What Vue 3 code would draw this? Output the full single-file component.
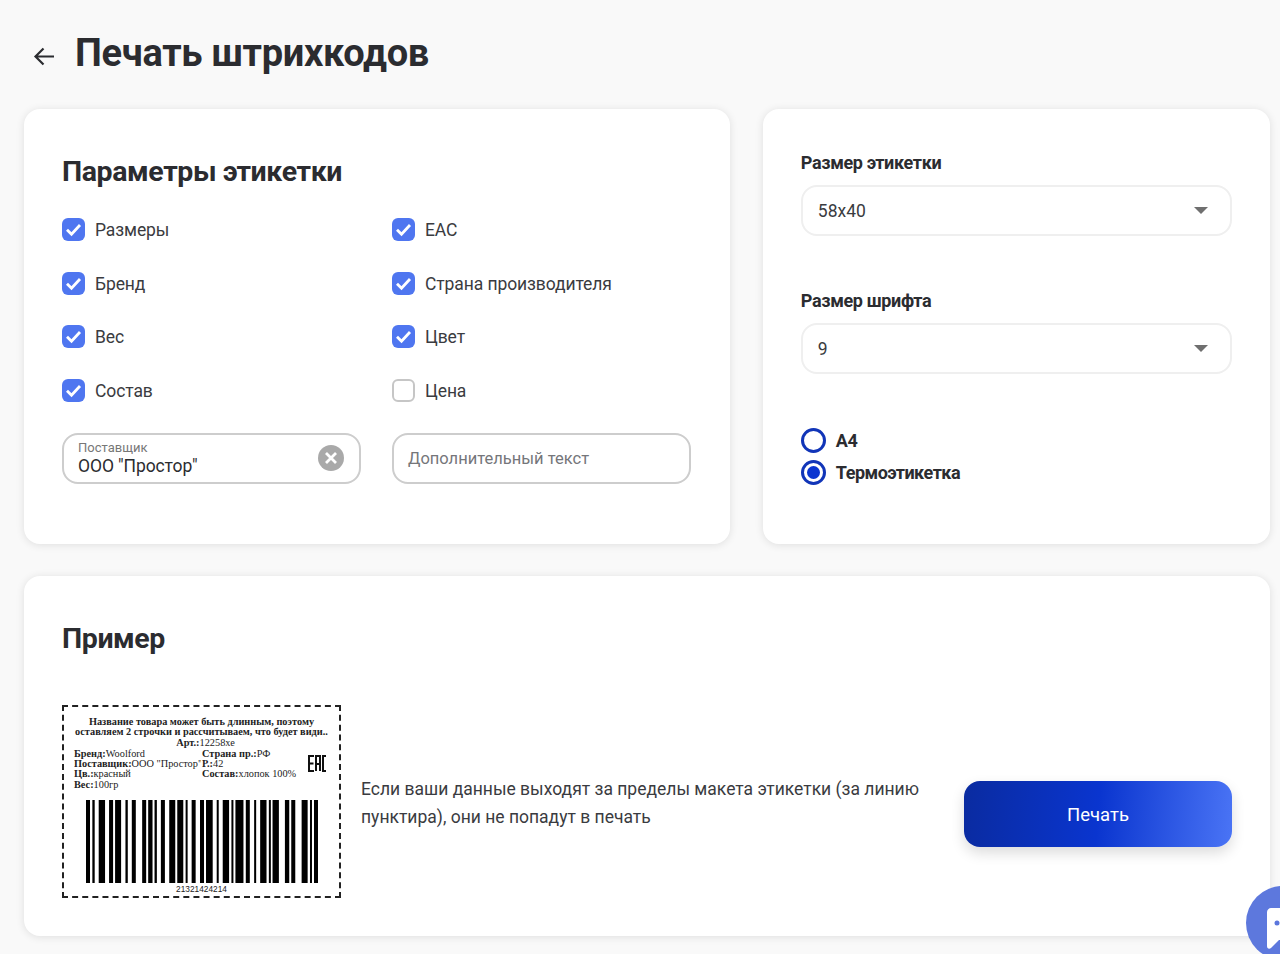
<script setup>
const leftChecks = [
  { label: 'Размеры', on: true },
  { label: 'Бренд', on: true },
  { label: 'Вес', on: true },
  { label: 'Состав', on: true }
]
const rightChecks = [
  { label: 'ЕАС', on: true },
  { label: 'Страна производителя', on: true },
  { label: 'Цвет', on: true },
  { label: 'Цена', on: false }
]
const checks = leftChecks.flatMap((c, i) => [c, rightChecks[i]])
const bars = [[108,120],[127,134],[146,165],[177,189],[195,213],[226,233],[245,257],[276,288],[294,307],[313,320],[332,344],[357,375],[381,399],[406,412],[424,436],[449,461],[467,487],[499,505],[517,536],[543,549],[555,579],[586,598],[611,617],[629,648],[655,661],[666,685],[703,716],[722,734],[753,771],[778,784],[790,802]]
</script>

<template>
  <div class="page">
    <header class="head">
      <svg class="back" width="22" height="22" viewBox="0 0 22 22" fill="none">
        <path d="M21 11.5H2.5M10.5 3.5l-8 8 8 8" stroke="#2b2c30" stroke-width="2.2"/>
      </svg>
      <h1>Печать штрихкодов</h1>
    </header>

    <div class="top">
      <section class="card params">
        <h2>Параметры этикетки</h2>
        <div class="checks">
          <label v-for="c in checks" :key="c.label" class="check">
            <span class="box" :class="{ on: c.on }">
              <svg v-if="c.on" width="23" height="23" viewBox="0 0 23 23" fill="none">
                <path d="M5 11.800l4.500 4.500 8.500-9.300" stroke="#fff" stroke-width="2.800"/>
              </svg>
            </span>
            <span class="check-text">{{ c.label }}</span>
          </label>
        </div>
        <div class="inputs">
          <div class="field supplier">
            <div class="field-text">
              <small>Поставщик</small>
              <span>ООО "Простор"</span>
            </div>
            <svg class="clear" width="26" height="26" viewBox="0 0 26 26">
              <circle cx="13" cy="13" r="13" fill="#a9a9a9"/>
              <path d="M8 8l10 10M18 8L8 18" stroke="#fff" stroke-width="2.800"/>
            </svg>
          </div>
          <div class="field extra">Дополнительный текст</div>
        </div>
      </section>

      <section class="card side">
        <div class="group">
          <h3>Размер этикетки</h3>
          <div class="select"><span>58x40</span><i class="caret"></i></div>
        </div>
        <div class="group second">
          <h3>Размер шрифта</h3>
          <div class="select"><span>9</span><i class="caret"></i></div>
        </div>
        <div class="radios">
          <div class="radio"><span class="ring"></span>А4</div>
          <div class="radio"><span class="ring on"></span>Термоэтикетка</div>
        </div>
      </section>
    </div>

    <section class="card sample">
      <h2>Пример</h2>
      <div class="sample-row">
        <div class="label">
          <div class="l-title">Название товара может быть длинным, поэтому<br>оставляем 2 строчки и рассчитываем, что будет види..</div>
          <div class="l-art"><b>Арт.:</b>12258хе</div>
          <div class="l-grid">
            <div><b>Бренд:</b>Woolford</div><div><b>Страна пр.:</b>РФ</div>
            <svg class="eac" width="19" height="17" viewBox="0 0 19 17" fill="none" stroke="#111" stroke-width="2">
              <path d="M6 1H1v15h5M1 8.500h4.500M8 16V1h4v15M8 9h4M18 1h-3v15h3"/>
            </svg>
            <div class="nowrap"><b>Поставщик:</b>ООО "Простор"</div><div><b>Р.:</b>42</div>
            <div><b>Цв.:</b>красный</div><div><b>Состав:</b>хлопок 100%</div>
            <div><b>Вес:</b>100гр</div>
          </div>
          <svg class="bars" width="232" height="83" viewBox="108 0 694 83" preserveAspectRatio="none">
            <rect v-for="b in bars" :key="b[0]" :x="b[0]" y="0" :width="b[1] - b[0]" height="83" fill="#000"/>
          </svg>
          <div class="code">21321424214</div>
        </div>
        <p class="note">Если ваши данные выходят за пределы макета этикетки (за линию пунктира), они не попадут в печать</p>
        <button class="print">Печать</button>
      </div>
    </section>

    <div class="chat">
      <svg width="34" height="44" viewBox="0 0 34 44">
        <path d="M6 0h28v32H14l-8 8c-2 1.500-4 .5-4-2V4c0-2 2-4 4-4z" fill="#fff"/>
        <circle cx="12" cy="15" r="2.500" fill="#5b76dc"/>
      </svg>
    </div>
  </div>
</template>

<style>
html, body { margin: 0; height: 100%; overflow: hidden; background: #f9f9f9; }
</style>

<style scoped>
.page {
  box-sizing: border-box;
  width: 1280px;
  height: 954px;
  padding: 0 10px 0 24px;
  font-family: Roboto, "Noto Sans", sans-serif;
  color: #2b2c30;
  background: #f9f9f9;
  overflow: hidden;
  position: relative;
}
.head { display: flex; align-items: center; height: 109px; padding-left: 9px; }
.back { margin-right: 20px; margin-top: 3px; }
h1 { margin: 0 0 4px; font-size: 38px; font-weight: 700; letter-spacing: -.3px; line-height: 1; }
h2 { margin: 0; padding-top: 1px; font-size: 28.500px; font-weight: 700; letter-spacing: -.4px; line-height: 40px; }
h3 { margin: 0; font-size: 18px; font-weight: 700; letter-spacing: -.35px; line-height: 26px; position: relative; top: 1px; }
.top { display: flex; gap: 32px; }
.card {
  box-sizing: border-box;
  background: #fff;
  border-radius: 16px;
  box-shadow: 0 1px 9px rgba(0, 0, 0, .11);
}
.params { width: 707px; height: 435px; padding: 42px 38px 0; }
.checks {
  display: grid;
  grid-template-columns: 299px 299px;
  column-gap: 31px;
  grid-auto-rows: 53.600px;
  margin-top: 11px;
}
.check { display: flex; align-items: center; gap: 10px; font-size: 17.500px; letter-spacing: -.1px; color: #3a3b40; }
.check-text { padding-top: 1px; }
.box {
  box-sizing: border-box;
  width: 23px;
  height: 23px;
  border-radius: 6px;
  border: 2px solid #c6c6c6;
  background: #fff;
  flex: none;
}
.box.on { background: #4f76f0; border: 0; }
.box svg { display: block; }
.inputs { display: grid; grid-template-columns: 299px 299px; column-gap: 31px; margin-top: 16px; }
.field {
  box-sizing: border-box;
  height: 51px;
  border: 2px solid #cdcdcd;
  border-radius: 16px;
  display: flex;
  align-items: center;
  padding: 0 15px 0 14px;
}
.supplier { justify-content: space-between; }
.clear { margin-top: -2px; }
.field-text { display: flex; flex-direction: column; }
.field-text small { font-size: 13px; line-height: 14px; color: #777; }
.field-text span { font-size: 17.500px; line-height: 22px; letter-spacing: -.1px; color: #2b2c30; }
.extra { font-size: 16.500px; color: #75767a; }
.side { width: 508px; height: 435px; margin-left: 1px; padding: 40px 38px 0; }
.group { width: 431px; }
.second { margin-top: 51px; }
.select {
  box-sizing: border-box;
  height: 51px;
  margin-top: 10px;
  padding: 0 22px 0 15px;
  border: 2px solid #efefef;
  border-radius: 16px;
  display: flex;
  align-items: center;
  justify-content: space-between;
  font-size: 17.500px;
  color: #3a3b40;
}
.caret { border: 7px solid transparent; border-top: 7px solid #6f6f6f; border-bottom: 0; }
.radios { margin-top: 54px; display: flex; flex-direction: column; gap: 7px; }
.radio { display: flex; align-items: center; gap: 10px; font-size: 18px; font-weight: 700; letter-spacing: -.5px; height: 25px; }
.ring {
  box-sizing: border-box;
  width: 25px;
  height: 25px;
  border-radius: 50%;
  border: 3px solid #1135b8;
  display: flex;
  align-items: center;
  justify-content: center;
}
.ring.on::after { content: ""; width: 13px; height: 13px; border-radius: 50%; background: #0b35d0; }
.sample { width: 1246px; height: 360px; margin-top: 32px; padding: 42px 38px 0; }
.sample-row { display: flex; align-items: flex-start; margin-top: 46px; }
.label {
  box-sizing: border-box;
  width: 279px;
  height: 193px;
  flex: none;
  border: 2px dashed #222;
  padding: 10px 0 0;
  font-family: "Liberation Serif", serif;
  font-size: 10.300px;
  line-height: 10.300px;
  color: #222;
}
.l-title { text-align: center; font-weight: 700; }
.l-art { text-align: center; margin-left: 8px; }
.l-grid { display: grid; grid-template-columns: 128px 104px 30px; margin-left: 10px; margin-top: 1px; }
.nowrap { white-space: nowrap; width: 127px; overflow: hidden; }
.eac { grid-column: 3; grid-row: 1 / 4; margin-top: 6px; margin-left: 2px; }
.bars { display: block; margin: 10px 0 0 22px; }
.code { text-align: center; font-family: "Liberation Sans", sans-serif; font-size: 8.300px; line-height: 11px; margin-top: 1px; }
.note {
  width: 572px;
  margin: 69.500px 0 0 20px;
  font-size: 17.500px;
  line-height: 28px;
  color: #3a3b40;
  flex: none;
}
.print {
  width: 268px;
  height: 66px;
  margin: 76px 0 0 31px;
  padding-top: 2px;
  flex: none;
  border: 0;
  border-radius: 16px;
  background: linear-gradient(95deg, #0a2ba0 0%, #0a35cf 50%, #4a74f5 100%);
  box-shadow: 0 6px 14px rgba(0, 0, 0, .14);
  color: #fff;
  font-family: inherit;
  font-size: 18.500px;
}
.chat {
  position: absolute;
  left: 1246px;
  top: 886px;
  width: 74px;
  height: 74px;
  border-radius: 50%;
  background: #5d78dd;
  overflow: hidden;
}
.chat svg { position: absolute; left: 19px; top: 22px; }
</style>
